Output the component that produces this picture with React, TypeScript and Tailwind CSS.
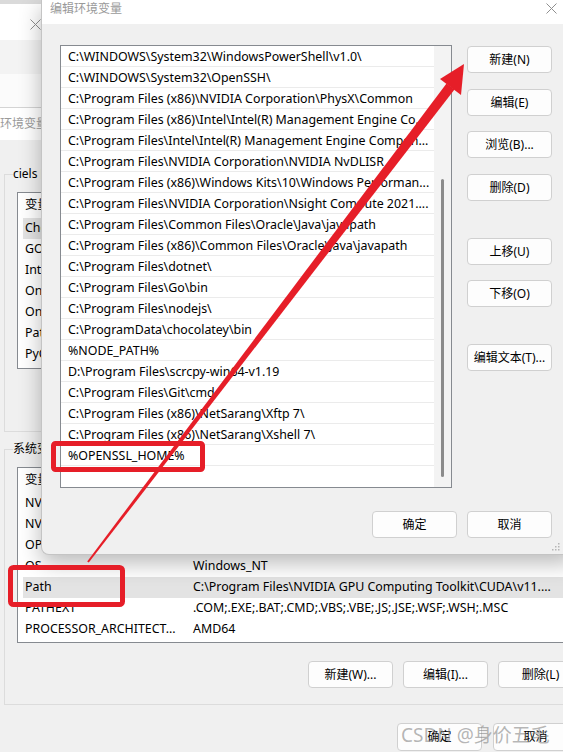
import React from 'react';

const pathEntries = [
  'C:\\WINDOWS\\System32\\WindowsPowerShell\\v1.0\\',
  'C:\\WINDOWS\\System32\\OpenSSH\\',
  'C:\\Program Files (x86)\\NVIDIA Corporation\\PhysX\\Common',
  'C:\\Program Files (x86)\\Intel\\Intel(R) Management Engine Co...',
  'C:\\Program Files\\Intel\\Intel(R) Management Engine Compon...',
  'C:\\Program Files\\NVIDIA Corporation\\NVIDIA NvDLISR',
  'C:\\Program Files (x86)\\Windows Kits\\10\\Windows Performan...',
  'C:\\Program Files\\NVIDIA Corporation\\Nsight Compute 2021....',
  'C:\\Program Files\\Common Files\\Oracle\\Java\\javapath',
  'C:\\Program Files (x86)\\Common Files\\Oracle\\Java\\javapath',
  'C:\\Program Files\\dotnet\\',
  'C:\\Program Files\\Go\\bin',
  'C:\\Program Files\\nodejs\\',
  'C:\\ProgramData\\chocolatey\\bin',
  '%NODE_PATH%',
  'D:\\Program Files\\scrcpy-win64-v1.19',
  'C:\\Program Files\\Git\\cmd',
  'C:\\Program Files (x86)\\NetSarang\\Xftp 7\\',
  'C:\\Program Files (x86)\\NetSarang\\Xshell 7\\',
  '%OPENSSL_HOME%',
];

const userVars = [
  { name: 'ChocolateyInstall', value: 'C:\\ProgramData\\chocolatey', active: true },
  { name: 'GOPATH', value: 'C:\\Users\\ciels\\go' },
  { name: 'IntelliJ IDEA', value: 'C:\\Program Files\\JetBrains\\IntelliJ IDEA' },
  { name: 'OneDrive', value: 'C:\\Users\\ciels\\OneDrive' },
  { name: 'OneDriveConsumer', value: 'C:\\Users\\ciels\\OneDrive' },
  { name: 'Path', value: 'C:\\Users\\ciels\\AppData\\Local\\Microsoft\\WindowsApps' },
  { name: 'PyCharm', value: 'C:\\Program Files\\JetBrains\\PyCharm' },
];

const systemVars = [
  { name: 'NVCUDASAMPLES_ROOT', value: 'C:\\ProgramData\\NVIDIA Corporation\\CUDA Samples' },
  { name: 'NVTOOLSEXT_PATH', value: 'C:\\Program Files\\NVIDIA Corporation\\NvToolsExt\\' },
  { name: 'OPENSSL_HOME', value: 'C:\\Program Files\\OpenSSL-Win64\\bin' },
  { name: 'OS', value: 'Windows_NT' },
  { name: 'Path', value: 'C:\\Program Files\\NVIDIA GPU Computing Toolkit\\CUDA\\v11....', active: true },
  { name: 'PATHEXT', value: '.COM;.EXE;.BAT;.CMD;.VBS;.VBE;.JS;.JSE;.WSF;.WSH;.MSC' },
  { name: 'PROCESSOR_ARCHITECT...', value: 'AMD64' },
];

function Btn({ label, className = '' }: { label: string; className?: string }) {
  return (
    <div
      className={`flex h-[27px] w-[85px] shrink-0 items-center justify-center rounded-[4px] border border-[#d0d0d0] bg-[#fdfdfd] text-[12px] text-black ${className}`}
    >
      {label}
    </div>
  );
}

function CloseX({ className = '' }: { className?: string }) {
  return (
    <svg width="11" height="11" viewBox="0 0 11 11" className={className}>
      <path d="M0.5 0.5 L10.5 10.5 M10.5 0.5 L0.5 10.5" stroke="#8f8f8f" strokeWidth="1" fill="none" />
    </svg>
  );
}

function VarList({
  rows,
  className = '',
}: {
  rows: { name: string; value: string; active?: boolean }[];
  className?: string;
}) {
  return (
    <div className={`border border-[#868a90] bg-white text-[12.4px] ${className}`}>
      <div className="ml-[5px] flex h-[25px] items-center">
        <span className="w-[170px] pl-[2px]">变量</span>
        <span>值</span>
      </div>
      {rows.map((r) => (
        <div
          key={r.name}
          className={`ml-[5px] flex h-[21px] items-center whitespace-nowrap ${r.active ? 'bg-[#e3e3e3]' : ''}`}
        >
          <span className="w-[170px] shrink-0 overflow-hidden pl-[2px]">{r.name}</span>
          <span>{r.value}</span>
        </div>
      ))}
    </div>
  );
}

export default function App() {
  return (
    <div className="relative h-[752px] w-[563px] overflow-hidden bg-[#f0f0f0] font-['Noto_Sans','Noto_Sans_CJK_SC',sans-serif] text-[12px] text-black">
      {/* environment variables window behind */}
      <div className="flex flex-col">
        <div className="h-[4px] bg-[#dadada]" />
        <div className="h-[36px] bg-white pl-[30px] pt-[15px]">
          <CloseX />
        </div>
        <div className="h-[34px] bg-[#f3f3f3]" />
        <div className="h-[34px] border-b border-[#d4d4d4] bg-[#fbfbfb]" />
        <div className="h-[32px] bg-white pt-[8px] leading-[16px] text-[#9a9a9a]">环境变量</div>
        <div className="h-[26px]" />

        <fieldset className="ml-[4px] w-[600px] border border-[#dcdcdc] pb-[17px]">
          <legend className="ml-[8px] leading-[16px]">ciels 的用户变量(U)</legend>
          <VarList rows={userVars} className="ml-[12px] mt-[10px] h-[177px] w-[560px]" />
          <div className="mt-[18px] flex h-[27px] gap-[10px] pl-[303px]">
            <Btn label="新建(N)..." />
            <Btn label="编辑(E)..." />
            <Btn label="删除(D)" />
          </div>
        </fieldset>

        <fieldset className="ml-[4px] mt-[9px] w-[600px] border border-[#dcdcdc] pb-[16px]">
          <legend className="ml-[8px] leading-[16px]">系统变量(S)</legend>
          <VarList rows={systemVars} className="ml-[12px] mt-[10px] h-[176px] w-[565px]" />
          <div className="mt-[18px] flex gap-[10px] pl-[303px]">
            <Btn label="新建(W)..." />
            <Btn label="编辑(I)..." />
            <Btn label="删除(L)" />
          </div>
        </fieldset>

        <div className="mt-[18px] flex gap-[11px] pl-[397px]">
          <Btn label="确定" className="h-[28px]" />
          <Btn label="取消" className="h-[28px]" />
        </div>
      </div>

      {/* edit dialog */}
      <div className="absolute left-[41px] top-0 z-10 flex h-[555px] w-[533px] flex-col overflow-hidden rounded-bl-[8px] border-b border-l border-[#c4c4c4] bg-[#f0f0f0] shadow-[0_8px_22px_rgba(0,0,0,0.28)]">
        <div className="flex h-[24px] shrink-0 items-start justify-between bg-white pl-[8px] pr-[17px]">
          <span className="pt-[1px] leading-[16px] text-[#9a9a9a]">编辑环境变量</span>
          <CloseX className="mt-[3px]" />
        </div>
        <div className="relative flex-1 pl-[18px] pt-[21px]">
          <div className="flex gap-[15px]">
            <div className="flex h-[443px] w-[392px] border border-[#868a90] bg-white text-[12.4px]">
              <div className="w-[373px]">
                {pathEntries.map((p) => (
                  <div
                    key={p}
                    className="flex h-[21px] items-center overflow-hidden whitespace-nowrap border-b border-[#ebebeb] pl-[7px] pt-[2px]"
                  >
                    {p}
                  </div>
                ))}
              </div>
              <div className="w-[17px] bg-[#f3f3f3] pl-[7px] pt-[133px]">
                <div className="h-[298px] w-[3px] rounded-full bg-[#8b8b8b]" />
              </div>
            </div>
            <div className="flex flex-col pt-[1px]">
              <Btn label="新建(N)" />
              <Btn label="编辑(E)" className="mt-[16px]" />
              <Btn label="浏览(B)..." className="mt-[15px]" />
              <Btn label="删除(D)" className="mt-[16px]" />
              <Btn label="上移(U)" className="mt-[37px]" />
              <Btn label="下移(O)" className="mt-[15px]" />
              <Btn label="编辑文本(T)..." className="mt-[37px]" />
            </div>
          </div>
          <div className="mt-[23px] flex justify-end gap-[10px] pr-[22px]">
            <Btn label="确定" />
            <Btn label="取消" />
          </div>
          {/* resize grip */}
          <svg width="8" height="8" viewBox="0 0 8 8" className="absolute bottom-[3px] right-[14px]">
            <rect x="6" y="0" width="1.5" height="1.5" fill="#b5b5b5" />
            <rect x="3" y="3" width="1.5" height="1.5" fill="#b5b5b5" />
            <rect x="6" y="3" width="1.5" height="1.5" fill="#b5b5b5" />
            <rect x="0" y="6" width="1.5" height="1.5" fill="#b5b5b5" />
            <rect x="3" y="6" width="1.5" height="1.5" fill="#b5b5b5" />
            <rect x="6" y="6" width="1.5" height="1.5" fill="#b5b5b5" />
          </svg>
        </div>
      </div>

      {/* red markup drawn on top */}
      <svg
        width="563"
        height="752"
        viewBox="0 0 563 752"
        className="pointer-events-none absolute left-0 top-0 z-20"
      >
        <rect x="53.5" y="443.5" width="149" height="26" rx="2" fill="none" stroke="#e61e28" strokeWidth="5" />
        <rect x="10.5" y="567.5" width="112" height="37" rx="3" fill="none" stroke="#e61e28" strokeWidth="5" />
        <polygon points="87.2,561.4 88.8,562.6 454.5,89.5 446.5,83.5" fill="#e61e28" />
        <polygon points="464,64 440,79 461,95" fill="#e61e28" />
      </svg>

      <div className="pointer-events-none absolute left-[401px] top-[721px] z-30 whitespace-nowrap text-[19px] leading-[28px] text-[rgba(120,120,120,0.55)]">
        CSDN @身价五毛
      </div>
    </div>
  );
}
